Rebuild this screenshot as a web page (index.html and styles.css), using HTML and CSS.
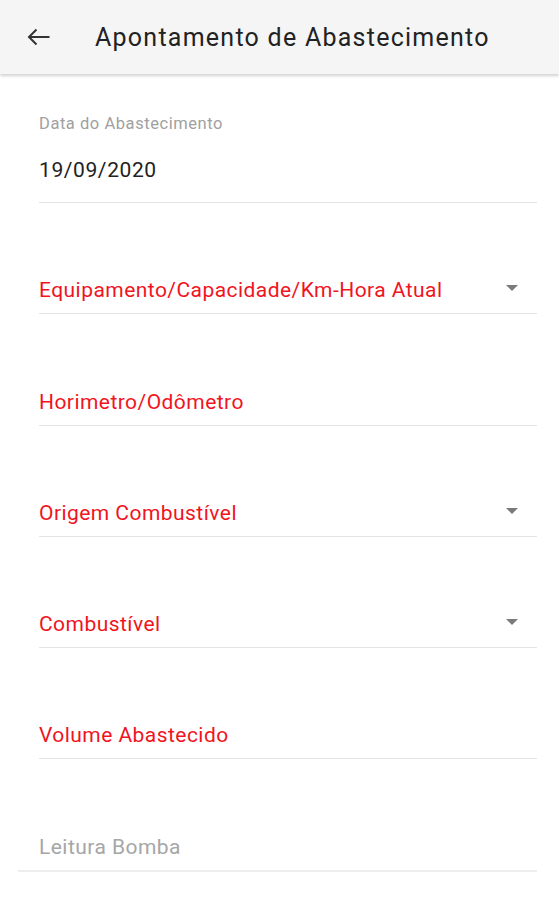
FILE: index.html
```html
<!DOCTYPE html>
<html lang="pt">
<head>
<meta charset="utf-8">
<title>Apontamento de Abastecimento</title>
<link rel="stylesheet" href="styles.css">
</head>
<body>
<header class="appbar">
  <svg class="back" width="24" height="18" viewBox="0 0 24 18" aria-hidden="true">
    <path d="M22.5 9H2 M9.5 1.5L2 9l7.5 7.5" fill="none" stroke="#333" stroke-width="2"/>
  </svg>
  <h1 class="title">Apontamento de Abastecimento</h1>
</header>
<main class="form">
  <div class="field field-date">
    <div class="label">Data do Abastecimento</div>
    <div class="value">19/09/2020</div>
  </div>
  <div class="field">
    <span class="ph required">Equipamento/Capacidade/Km-Hora Atual</span>
    <span class="drop"></span>
  </div>
  <div class="field">
    <span class="ph required">Horimetro/Odômetro</span>
  </div>
  <div class="field">
    <span class="ph required">Origem Combustível</span>
    <span class="drop"></span>
  </div>
  <div class="field">
    <span class="ph required">Combustível</span>
    <span class="drop"></span>
  </div>
  <div class="field">
    <span class="ph required">Volume Abastecido</span>
  </div>
  <div class="field field-last">
    <span class="ph muted">Leitura Bomba</span>
  </div>
</main>
</body>
</html>
```
FILE: styles.css
```css
html, body {
  margin: 0;
  padding: 0;
  background: #ffffff;
  font-family: Roboto, "Noto Sans", "Liberation Sans", sans-serif;
}

.appbar {
  height: 74px;
  background: #f5f5f5;
  display: flex;
  align-items: center;
  box-shadow: 0 2px 3px rgba(0, 0, 0, 0.18);
  position: relative;
}

.back {
  margin-left: 27px;
  flex: none;
}

.title {
  margin: 0 0 0 44px;
  font-size: 25px;
  font-weight: 400;
  color: #222222;
  letter-spacing: 1.25px;
}

.form {
  padding: 0 22px 0 39px;
}

.field {
  display: flex;
  align-items: center;
  justify-content: space-between;
  padding: 75.3px 19px 11px 0;
  border-bottom: 1.5px solid #e4e4e4;
  line-height: 24px;
}

.field-date {
  flex-direction: column;
  align-items: flex-start;
  padding-top: 42px;
  padding-bottom: 20px;
}

.label {
  font-size: 16.5px;
  line-height: 16px;
  letter-spacing: 0.55px;
  color: #a0a0a0;
}

.value {
  margin-top: 26px;
  font-size: 21px;
  line-height: 24px;
  letter-spacing: 0.6px;
  color: #222222;
}

.ph {
  font-size: 21px;
  letter-spacing: 0.45px;
}

.required {
  color: #f0141e;
}

.muted {
  color: #a6a6a6;
}

.drop {
  width: 0;
  height: 0;
  border-left: 6px solid transparent;
  border-right: 6px solid transparent;
  border-top: 6px solid #7a7a7a;
  margin-top: -4px;
}

.field-last {
  margin-left: -21px;
  padding-left: 21px;
  border-bottom: 2px solid #eeeeee;
}
```
